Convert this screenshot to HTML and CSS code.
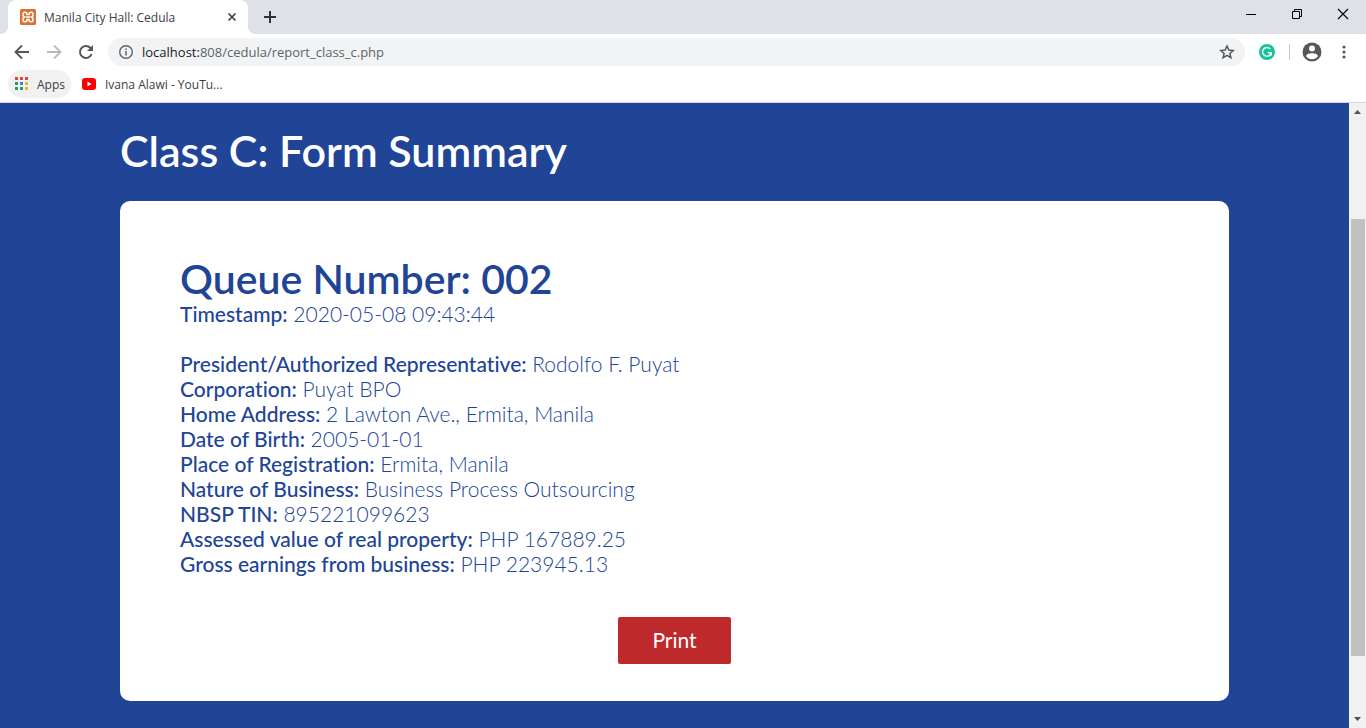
FILE: index.html
```html
<!DOCTYPE html>
<html lang="en">
<head>
<meta charset="utf-8">
<title>Manila City Hall: Cedula</title>
<link rel="stylesheet" href="styles.css">
</head>
<body>
<div class="browser">
  <header class="tab-strip">
    <div class="tab">
      <svg class="favicon" viewBox="0 0 16 16" width="16" height="16"><rect width="16" height="16" rx="1.500" fill="#dd7035"/><path d="M5.500 8H10.500M7 5.500C7 4 6.200 3.200 5 3.200C3.700 3.200 3 4 3 5.400C3 7 3.700 8 5 8C3.700 8 3 9 3 10.400C3 12 3.700 12.800 5 12.800C6.300 12.800 7 12 7 10.500H9C9 12 9.700 12.800 11 12.800C12.300 12.800 13 12 13 10.400C13 9 12.300 8 11 8C12.300 8 13 7 13 5.400C13 4 12.300 3.200 11 3.200C9.800 3.200 9 4 9 5.500Z" fill="none" stroke="#fff" stroke-width="1.500"/></svg>
      <span class="tab-title">Manila City Hall: Cedula</span>
      <button class="icon-button" aria-label="Close tab"><svg viewBox="0 0 16 16" width="16" height="16"><path d="M4.500 4.500L11.500 11.500M11.500 4.500L4.500 11.500" stroke="#3c4043" stroke-width="1.700"/></svg></button>
    </div>
    <button class="icon-button new-tab" aria-label="New tab"><svg viewBox="0 0 16 16" width="16" height="16"><path d="M8 2V14M2 8H14" stroke="#2f3235" stroke-width="2"/></svg></button>
    <div class="window-controls">
      <button class="icon-button" aria-label="Minimize"><svg viewBox="0 0 12 12" width="12" height="12"><path d="M1 6.500H11" stroke="#000"/></svg></button>
      <button class="icon-button" aria-label="Restore"><svg viewBox="0 0 12 12" width="12" height="12"><path d="M1.500 3.500H8.500V10.500H1.500ZM3.500 3.500V1.500H10.500V8.500H8.500" fill="none" stroke="#000"/></svg></button>
      <button class="icon-button" aria-label="Close"><svg viewBox="0 0 12 12" width="12" height="12"><path d="M1 1L11 11M11 1L1 11" stroke="#000" stroke-width="1.100"/></svg></button>
    </div>
  </header>
  <nav class="toolbar" aria-label="Navigation">
    <button class="icon-button" aria-label="Back"><svg viewBox="0 0 16 16" width="16" height="16"><path d="M15 8H2M8 1.500L1.500 8L8 14.500" fill="none" stroke="#54575b" stroke-width="1.900"/></svg></button>
    <button class="icon-button" aria-label="Forward"><svg viewBox="0 0 16 16" width="16" height="16"><path d="M1 8H14M8 1.500L14.500 8L8 14.500" fill="none" stroke="#b9bbbe" stroke-width="1.900"/></svg></button>
    <button class="icon-button" aria-label="Reload"><svg viewBox="0 0 16 16" width="16" height="16"><path d="M13.600 10A6 6 0 1 1 12.300 3.800L13.500 5" fill="none" stroke="#54575b" stroke-width="2"/><path d="M15 1V7H9Z" fill="#54575b"/></svg></button>
    <div class="address-bar">
      <svg viewBox="0 0 16 16" width="16" height="16"><circle cx="8" cy="8" r="6.300" fill="none" stroke="#5f6368" stroke-width="1.400"/><path d="M8 7V11.500M8 4.500V6" stroke="#5f6368" stroke-width="1.500"/></svg>
      <span class="url"><span class="host">localhost:</span>808/cedula/report_class_c.php</span>
      <button class="icon-button" aria-label="Bookmark this page"><svg viewBox="0 0 16 16" width="16" height="16"><path d="M8 2L9.800 6.100L14.200 6.500L10.900 9.400L11.900 13.700L8 11.400L4.100 13.700L5.100 9.400L1.800 6.500L6.200 6.100Z" fill="none" stroke="#54575b" stroke-width="1.500"/></svg></button>
    </div>
    <button class="icon-button extension" aria-label="Grammarly"><svg viewBox="0 0 16 16" width="16" height="16"><circle cx="8" cy="8" r="8" fill="#15c39a"/><path d="M11.300 5A4.400 4.400 0 1 0 12.300 8.700H8.800M12.300 8.700V11.500" fill="none" stroke="#fff" stroke-width="1.400"/></svg></button>
    <span class="divider"></span>
    <button class="icon-button profile" aria-label="Profile"><svg viewBox="0 0 20 20" width="20" height="20"><circle cx="10" cy="10" r="9.500" fill="#54575b"/><circle cx="10" cy="6.500" r="3" fill="#fff"/><path d="M4 14.200C4.500 11.800 7.500 11.200 10 11.200S15.500 11.800 16 14.200C14.600 16.200 12.300 17.200 10 17.200S5.400 16.200 4 14.200Z" fill="#fff"/></svg></button>
    <button class="icon-button menu" aria-label="Menu"><svg viewBox="0 0 16 16" width="16" height="16"><g fill="#54575b"><circle cx="8" cy="3" r="1.600"/><circle cx="8" cy="8" r="1.600"/><circle cx="8" cy="13" r="1.600"/></g></svg></button>
  </nav>
  <nav class="bookmarks" aria-label="Bookmarks">
    <a class="bookmark apps" href="#"><svg viewBox="0 0 14 14" width="14" height="14"><path d="M0 0H3V3H0ZM5 0H8V3H5ZM10 0H13V3H10Z" fill="#dc4437"/><path d="M0 5H3V8H0ZM0 10H3V13H0ZM5 10H8V13H5Z" fill="#2b9b58"/><path d="M5 5H8V8H5Z" fill="#3f7de8"/><path d="M10 5H13V8H10ZM10 10H13V13H10Z" fill="#efb331"/></svg>Apps</a>
    <a class="bookmark" href="#"><svg viewBox="0 0 16 16" width="16" height="16"><rect x="1" y="2" width="14" height="12" rx="3" fill="#f00"/><path d="M6.500 5.500V10.500L10.500 8Z" fill="#fff"/></svg>Ivana Alawi - YouTu...</a>
  </nav>
  <div class="viewport">
    <main class="page">
      <h1>Class C: Form Summary</h1>
      <section class="card">
        <h2>Queue Number: 002</h2>
        <p class="timestamp"><b>Timestamp:</b> 2020-05-08 09:43:44</p>
        <p><b>President/Authorized Representative:</b> Rodolfo F. Puyat</p>
        <p><b>Corporation:</b> Puyat BPO</p>
        <p><b>Home Address:</b> 2 Lawton Ave., Ermita, Manila</p>
        <p><b>Date of Birth:</b> 2005-01-01</p>
        <p><b>Place of Registration:</b> Ermita, Manila</p>
        <p><b>Nature of Business:</b> Business Process Outsourcing</p>
        <p><b>NBSP TIN:</b> 895221099623</p>
        <p><b>Assessed value of real property:</b> PHP 167889.25</p>
        <p><b>Gross earnings from business:</b> PHP 223945.13</p>
        <button class="print">Print</button>
      </section>
    </main>
    <div class="scrollbar">
      <svg viewBox="0 0 17 17" width="17" height="17"><path d="M5 11H12L8.500 7Z" fill="#505050"/></svg>
      <div class="track"><div class="thumb"></div></div>
      <svg viewBox="0 0 17 17" width="17" height="17"><path d="M5 6H12L8.500 10Z" fill="#505050"/></svg>
    </div>
  </div>
</div>
</body>
</html>
```
FILE: styles.css
```css
* { box-sizing: border-box; }
body { margin: 0; font-family: "Open Sans", "Noto Sans", sans-serif; font-size: 12px; color: #3c4043; }
button { font: inherit; border: 0; padding: 0; background: none; cursor: pointer; }
svg { display: block; flex: none; }
.browser { display: flex; flex-direction: column; height: 100vh; background: #fff; }
.icon-button { display: grid; place-items: center; flex: none; }

.tab-strip { display: flex; align-items: center; height: 34px; flex: none; padding-left: 8px; background: #dee1e6; }
.tab { position: relative; display: flex; align-items: center; gap: 8px; width: 240px; height: 34px; padding: 0 8px 0 12px; background: #fff; border-radius: 8px 8px 0 0; }
.tab::before, .tab::after { content: ""; position: absolute; bottom: 0; width: 8px; height: 8px; }
.tab::before { right: 100%; background: radial-gradient(circle at 0 0, #dee1e6 8px, #fff 8px); }
.tab::after { left: 100%; background: radial-gradient(circle at 100% 0, #dee1e6 8px, #fff 8px); }
.tab-title { flex: 1; white-space: nowrap; }
.new-tab { margin-left: 14px; }
.window-controls { display: flex; height: 28px; margin: 0 0 6px auto; }
.window-controls .icon-button { width: 46px; }

.toolbar { display: flex; align-items: center; height: 36px; flex: none; padding-left: 14px; gap: 16px; }
.address-bar { flex: 1; display: flex; align-items: center; gap: 8px; height: 28px; margin-left: -2px; padding: 0 10px; border-radius: 14px; background: #f1f3f4; }
.url { flex: 1; font-size: 13px; color: #5f6368; }
.host { color: #202124; }
.extension { margin-left: -2px; }
.divider { width: 1px; height: 16px; margin-left: -2px; background: #c6c8cb; }
.profile { margin-left: -4px; }
.menu { margin: 0 14px 0 -2px; }

.bookmarks { display: flex; align-items: center; gap: 2px; flex: none; height: 33px; padding: 0 8px 4px; border-bottom: 1px solid #cfd8ea; }
.bookmark { display: flex; align-items: center; gap: 8px; height: 28px; padding: 0 8px; border-radius: 14px; color: #3c4043; text-decoration: none; }
.apps { padding: 0 6px 0 7px; background: #f1f1f2; }

.viewport { flex: 1; display: flex; min-height: 0; }
.page { flex: 1; overflow: hidden; padding: 24px 120px; background: #204496; font-family: Muli, Lato, sans-serif; font-size: 21px; line-height: 25px; font-variant-ligatures: none; }
h1, h2, p { margin: 0; }
h1, h2 { font-weight: 600; }
h1 { margin-bottom: 26px; font-size: 43px; line-height: 48px; color: #fff; }
.card { display: flex; flex-direction: column; padding: 55px 60px 37px; border-radius: 10px; background: #fff; color: #204496; font-weight: 300; }
h2 { font-size: 41px; line-height: 45px; }
b { font-weight: 500; }
.timestamp { margin-bottom: 25px; }
.print { align-self: center; margin-top: 41px; padding: 10px 34px 12px; border-radius: 2px; background: #be2a2b; color: #fff; font-weight: 400; }

.scrollbar { display: flex; flex-direction: column; width: 17px; background: #f1f1f1; }
.track { flex: 1; display: flex; flex-direction: column; padding: 0 1px 0 2px; }
.track::before { content: ""; flex: 99; }
.thumb { flex: 437; background: #c1c1c1; }
.track::after { content: ""; flex: 55; }
```
